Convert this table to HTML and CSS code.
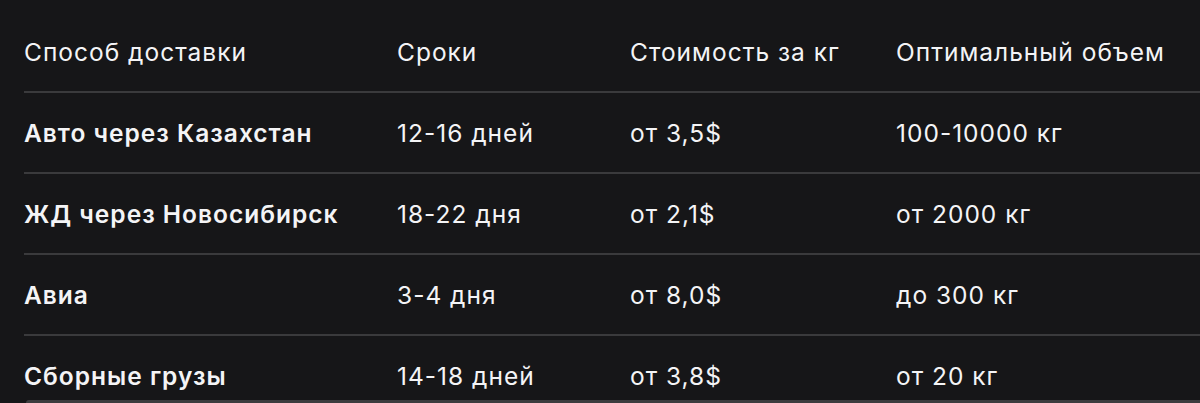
FILE: index.html
```html
<!DOCTYPE html>
<html lang="ru">
<head>
<meta charset="utf-8">
<link rel="stylesheet" href="styles.css">
</head>
<body>
<div class="wrap">
  <table class="tbl">
    <colgroup>
      <col class="c1"><col class="c2"><col class="c3"><col class="c4">
    </colgroup>
    <thead>
      <tr><th>Способ доставки</th><th>Сроки</th><th>Стоимость за кг</th><th>Оптимальный объем</th></tr>
    </thead>
    <tbody>
      <tr><td class="name">Авто через Казахстан</td><td>12-16 дней</td><td>от 3,5$</td><td>100-10000 кг</td></tr>
      <tr><td class="name">ЖД через Новосибирск</td><td>18-22 дня</td><td>от 2,1$</td><td>от 2000 кг</td></tr>
      <tr><td class="name">Авиа</td><td>3-4 дня</td><td>от 8,0$</td><td>до 300 кг</td></tr>
      <tr class="last"><td class="name">Сборные грузы</td><td>14-18 дней</td><td>от 3,8$</td><td>от 20 кг</td></tr>
    </tbody>
  </table>
  <div class="scrollbar"></div>
</div>
</body>
</html>
```
FILE: styles.css
```css
html, body {
  margin: 0;
  padding: 0;
  background: #161618;
  height: 100%;
  overflow: hidden;
}
body {
  font-family: Inter, "Noto Sans", sans-serif;
  color: #f4f4f6;
}
.wrap {
  margin-left: 24px;
}
.tbl {
  width: 1176px;
  border-collapse: collapse;
  table-layout: fixed;
}
.c1 { width: 373px; }
.c2 { width: 233px; }
.c3 { width: 266px; }
.c4 { width: auto; }
th, td {
  text-align: left;
  font-size: 24.5px;
  letter-spacing: 1px;
  line-height: 30px;
  padding: 0;
  white-space: nowrap;
}
th {
  font-weight: 400;
  padding-top: 37px;
  padding-bottom: 24px;
  border-bottom: 2px solid #3a3a3c;
}
td {
  font-weight: 400;
  padding-top: 25px;
  padding-bottom: 24px;
  border-bottom: 2px solid #3a3a3c;
}
td.name {
  font-weight: 600;
}
tr.last td {
  border-bottom: none;
  padding-bottom: 9px;
}
.scrollbar {
  height: 6px;
  margin-left: 2px;
  background: #3c3c3e;
  border-radius: 3px 0 0 3px;
}
```
